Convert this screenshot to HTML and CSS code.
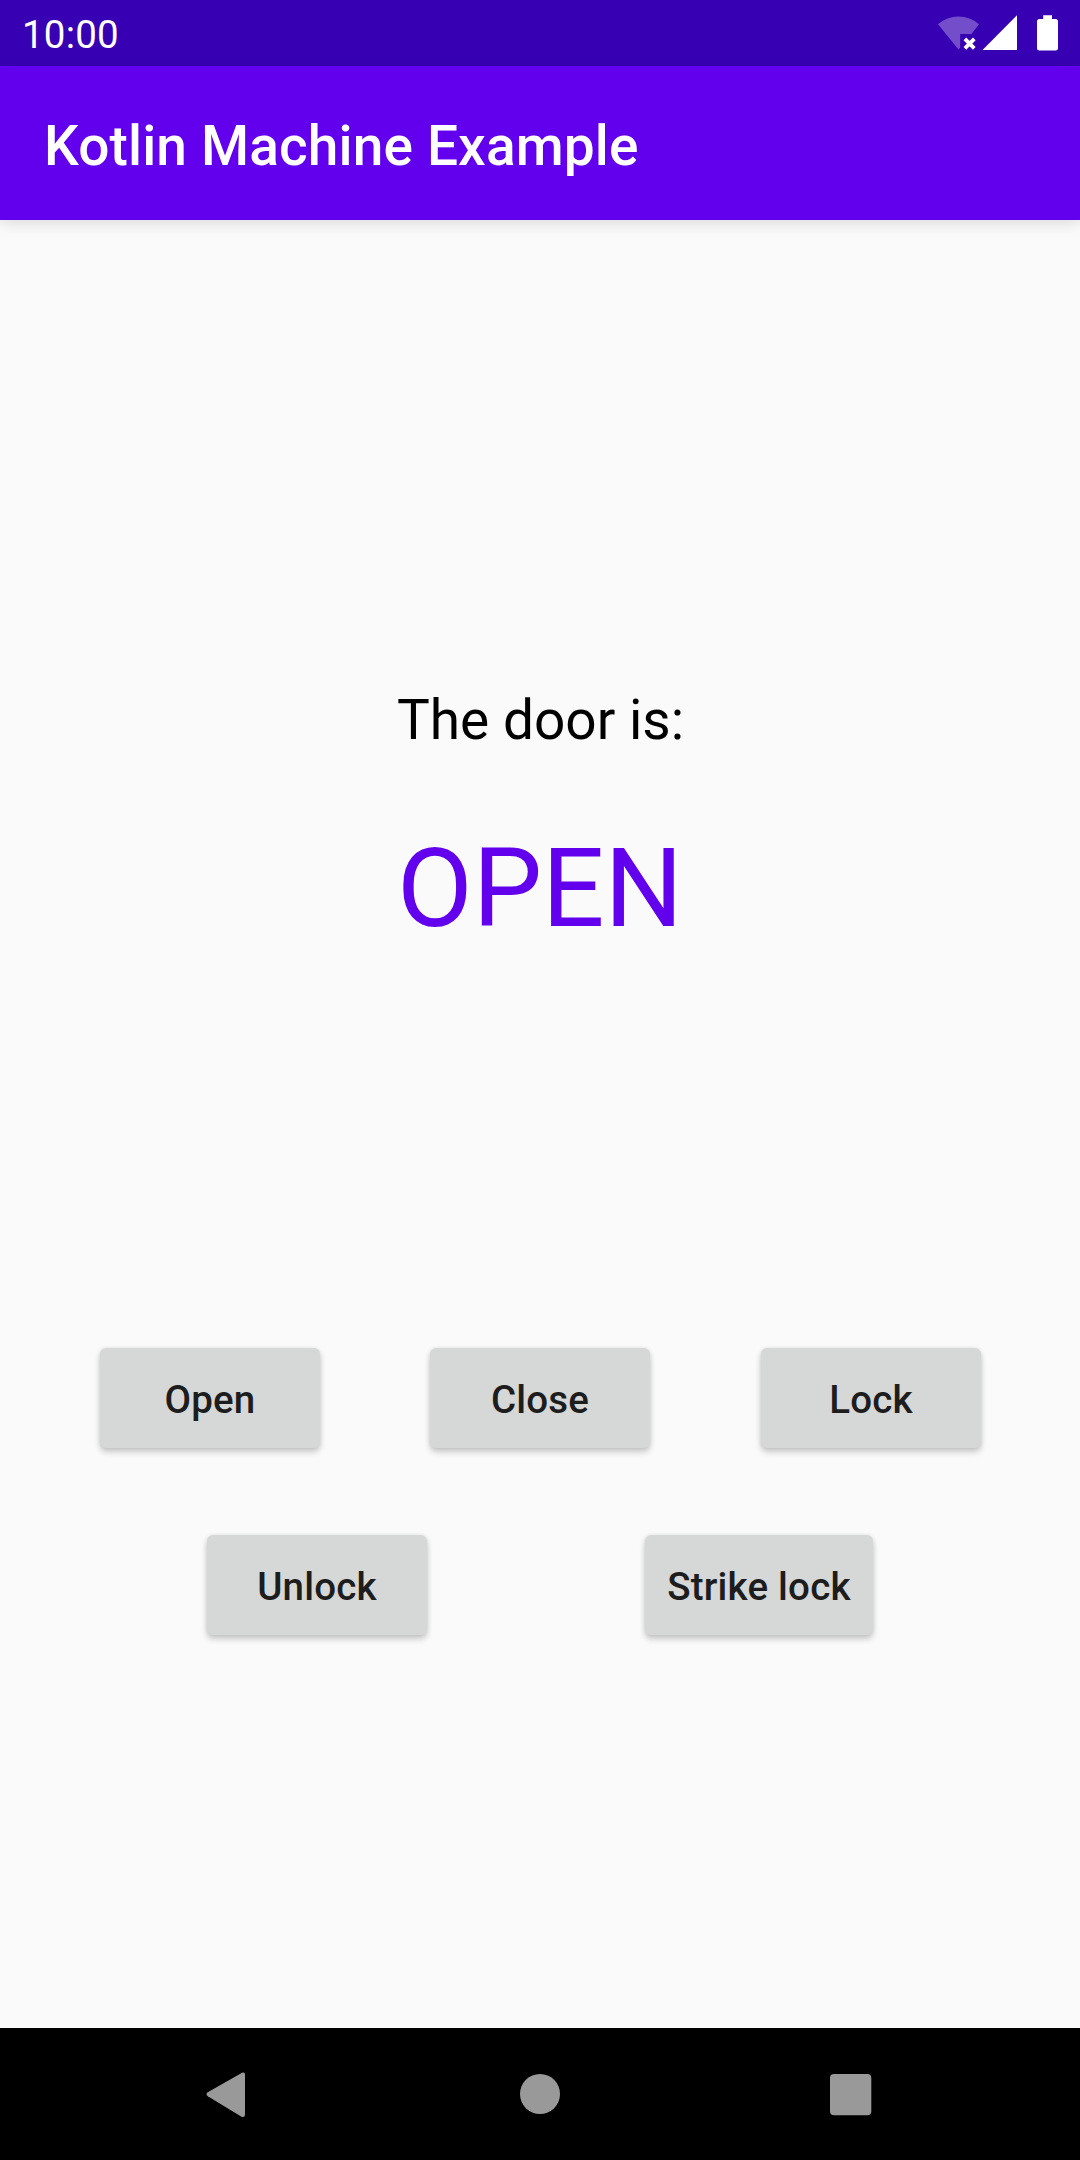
FILE: index.html
```html
<!DOCTYPE html>
<html lang="en">
<head>
<meta charset="utf-8">
<title>Kotlin Machine Example</title>
<link rel="stylesheet" href="styles.css">
</head>
<body>
<div class="screen">
  <div class="status-bar">
    <span class="clock">10:00</span>
    <svg class="status-icons" width="144" height="66" viewBox="0 0 144 66" aria-hidden="true">
      <path class="wifi" d="M2 24.300A31 31 0 0 1 43 24.300L35.500 34H24.200V47.500L22.500 49.600Z"/>
      <path class="wifi-off" d="M28.900 38.900L38.300 48.300M38.300 38.900L28.900 48.300"/>
      <path class="solid" d="M46.500 50L81 15.300V50Z"/>
      <path class="solid" d="M107.200 15.300H116V19H119.500Q122 19 122 21.500V48Q122 50.500 119.500 50.500H103.500Q101 50.500 101 48V21.500Q101 19 103.500 19H107.200Z"/>
    </svg>
  </div>
  <header class="app-bar"><h1 class="title">Kotlin Machine Example</h1></header>
  <main class="content">
    <p class="label">The door is:</p>
    <p class="state">OPEN</p>
    <div class="row row-three">
      <button class="btn">Open</button>
      <button class="btn">Close</button>
      <button class="btn btn-last">Lock</button>
    </div>
    <div class="row row-two">
      <button class="btn">Unlock</button>
      <button class="btn btn-wide">Strike lock</button>
    </div>
  </main>
  <nav class="nav-bar">
    <svg class="nav-icon" width="48" height="132" viewBox="0 0 48 132"><path d="M39 44.800Q41.800 43.500 42 46.500V86.500Q41.800 90 38.500 88.800L4.800 68.300Q2.200 66.300 4.800 64.300Z"/></svg>
    <svg class="nav-icon" width="48" height="132" viewBox="0 0 48 132"><circle cx="25" cy="66" r="20"/></svg>
    <svg class="nav-icon" width="48" height="132" viewBox="0 0 48 132"><rect x="3" y="46" width="41.300" height="41.300" rx="4"/></svg>
  </nav>
</div>
</body>
</html>
```
FILE: styles.css
```css
* {
  box-sizing: border-box;
}

body {
  margin: 0;
  font-family: Roboto, sans-serif;
  background: #fafafa;
}

.screen {
  display: flex;
  flex-direction: column;
  width: 1080px;
  height: 2160px;
  overflow: hidden;
}

.status-bar {
  display: flex;
  justify-content: space-between;
  height: 66px;
  padding-left: 22px;
  background: #3700b3;
}

.clock {
  padding-top: 2px;
  font-size: 38.5px;
  letter-spacing: 0.2px;
  line-height: 66px;
  color: #fff;
}

.status-icons {
  display: block;
}

.wifi {
  fill: #fff;
  opacity: 0.3;
}

.wifi-off {
  fill: none;
  stroke: #fff;
  stroke-width: 3.8;
}

.solid {
  fill: #fff;
}

.app-bar {
  height: 154px;
  padding: 6px 44px 0;
  background: #6200ee;
  box-shadow: 0 3px 14px rgba(0, 0, 0, 0.13);
}

.title {
  margin: 0;
  font-size: 55px;
  font-weight: 500;
  letter-spacing: 0.15px;
  line-height: 148px;
  color: #fff;
}

.content {
  display: flex;
  flex: 1;
  flex-direction: column;
  padding-top: 468px;
}

.label,
.state {
  margin: 0;
  text-align: center;
}

.label {
  padding-left: 1px;
  font-size: 55px;
  line-height: 64px;
  color: #000;
}

.state {
  margin-top: 73px;
  font-size: 110px;
  line-height: 128px;
  color: #6200ee;
}

.row {
  display: flex;
}

.row-three {
  gap: 110px;
  margin-top: 395px;
  padding-left: 100px;
}

.row-two {
  gap: 218px;
  margin-top: 87px;
  padding-left: 207px;
}

.btn {
  width: 220px;
  height: 100px;
  padding: 4px 0 0;
  border: 0;
  border-radius: 6px;
  background: #d6d7d7;
  box-shadow: 0 4px 6px rgba(0, 0, 0, 0.2), 0 0 4px rgba(0, 0, 0, 0.08);
  font-family: inherit;
  font-size: 38.5px;
  font-weight: 500;
  letter-spacing: 0.2px;
  line-height: 46px;
  color: #1d1d1d;
  white-space: nowrap;
}

.btn-last {
  margin-left: 1px;
}

.btn-wide {
  width: 228px;
}

.nav-bar {
  display: flex;
  justify-content: space-between;
  height: 132px;
  padding: 0 205px 0 203px;
  background: #000;
}

.nav-icon {
  display: block;
  fill: #999;
}
```
